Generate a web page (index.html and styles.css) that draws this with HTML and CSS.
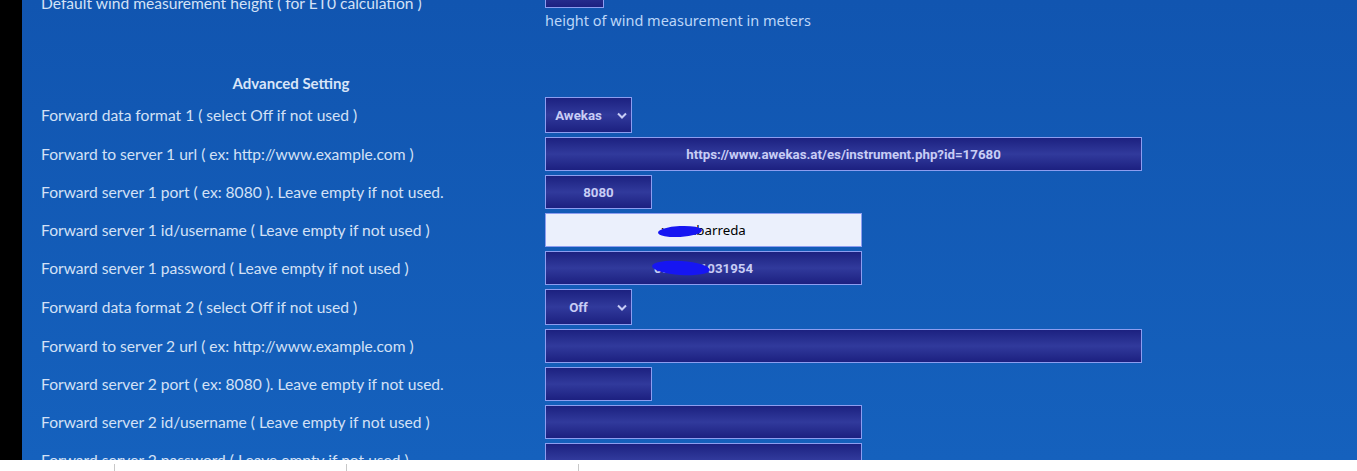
FILE: index.html
```html
<!DOCTYPE html>
<html>

<head>
    <meta charset="utf-8">
    <title>Weather station settings</title>
    <link rel="stylesheet" href="styles.css">
</head>

<body>
    <div class="screen">
        <div class="strip"></div>
        <main class="panel">
            <div class="form">
                <label class="name">Default wind measurement height ( for ET0 calculation )</label>
                <div class="field">
                    <input class="box tiny" type="text" value="">
                    <div class="hint">height of wind measurement in meters</div>
                </div>

                <div class="spacer"></div>

                <div class="section">Advanced Setting</div>

                <label class="name">Forward data format 1 ( select Off if not used )</label>
                <div class="field">
                    <span class="pick">
                        <select class="box">
                            <option>Off</option>
                            <option selected>Awekas</option>
                        </select>
                        <svg class="chev" width="10" height="7" viewBox="0 0 10 7"><path d="M1 1.5 L5 5.5 L9 1.5" fill="none" stroke="#c8cdf5" stroke-width="2"/></svg>
                    </span>
                </div>

                <label class="name">Forward to server 1 url ( ex: http://www.example.com )</label>
                <div class="field"><input class="box wide" type="text" value="https://www.awekas.at/es/instrument.php?id=17680"></div>

                <label class="name">Forward server 1 port ( ex: 8080 ). Leave empty if not used.</label>
                <div class="field"><input class="box short" type="text" value="8080"></div>

                <label class="name">Forward server 1 id/username ( Leave empty if not used )</label>
                <div class="field">
                    <span class="masked">
                        <input class="box mid light" type="text" value="xxxxxbarreda">
                        <span class="scribble user"></span>
                    </span>
                </div>

                <label class="name">Forward server 1 password ( Leave empty if not used )</label>
                <div class="field">
                    <span class="masked">
                        <input class="box mid" type="text" value="0000001031954">
                        <span class="scribble pass"></span>
                    </span>
                </div>

                <label class="name">Forward data format 2 ( select Off if not used )</label>
                <div class="field">
                    <span class="pick">
                        <select class="box">
                            <option selected>Off</option>
                            <option>Awekas</option>
                        </select>
                        <svg class="chev" width="10" height="7" viewBox="0 0 10 7"><path d="M1 1.5 L5 5.5 L9 1.5" fill="none" stroke="#c8cdf5" stroke-width="2"/></svg>
                    </span>
                </div>

                <label class="name">Forward to server 2 url ( ex: http://www.example.com )</label>
                <div class="field"><input class="box wide" type="text" value=""></div>

                <label class="name">Forward server 2 port ( ex: 8080 ). Leave empty if not used.</label>
                <div class="field"><input class="box short" type="text" value=""></div>

                <label class="name">Forward server 2 id/username ( Leave empty if not used )</label>
                <div class="field"><input class="box mid" type="text" value=""></div>

                <label class="name">Forward server 2 password ( Leave empty if not used )</label>
                <div class="field"><input class="box mid" type="password" value=""></div>
            </div>
        </main>
    </div>
    <footer class="tabs">
        <span></span>
        <span></span>
        <span></span>
        <span></span>
    </footer>
</body>

</html>
```

FILE: styles.css
```css
html,
body {
    margin: 0;
    padding: 0;
    width: 100%;
    height: 100%;
    overflow: hidden;
}

body {
    background-color: #fff;
    font-family: Lato, "Noto Sans", sans-serif;
}

.screen {
    display: flex;
    height: 460px;
    overflow: hidden;
}

.strip {
    width: 22px;
    flex: none;
    background-color: #000;
}

.panel {
    flex: 1;
    background: linear-gradient(#1155b0, #1561bd);
}

/* the page is scrolled a little, so the first row is cut at the top */
.form {
    display: grid;
    grid-template-columns: 504px auto;
    row-gap: 4px;
    margin-top: -26px;
    padding-left: 19px;
}

.name {
    display: flex;
    align-items: center;
    color: #d3e1f6;
    font-size: 15.6px;
}

.field {
    display: flex;
    flex-direction: column;
    align-items: flex-start;
}

.hint {
    height: 21px;
    padding-top: 2px;
    line-height: 20px;
    color: #bcd6f8;
    font-family: "Noto Sans", sans-serif;
    font-size: 14.5px;
}

.spacer {
    grid-column: 1 / 3;
    height: 35px;
}

.section {
    grid-column: 1 / 3;
    width: 500px;
    height: 19px;
    line-height: 19px;
    text-align: center;
    color: #d8e5f8;
    font-weight: bold;
    font-size: 15px;
}

.box {
    box-sizing: border-box;
    height: 34px;
    margin: 0;
    border: 1px solid #8d9df0;
    border-radius: 0;
    background: linear-gradient(#1c2180, #313a9c 50%, #1c2080);
    color: #c8cdf5;
    font-family: Roboto, sans-serif;
    font-weight: bold;
    font-size: 13.3px;
    text-align: center;
    outline: none;
}

.tiny {
    width: 59px;
}

.short {
    width: 107px;
}

.mid {
    width: 317px;
}

.wide {
    width: 597px;
}

.light {
    background: #ebf0fc;
    color: #000;
    font-weight: normal;
    font-family: "Noto Sans", sans-serif;
}

.pick {
    position: relative;
    display: inline-block;
}

.pick select {
    width: 87px;
    height: 36px;
    padding: 0 26px 0 6px;
    appearance: none;
    -webkit-appearance: none;
    text-align-last: center;
}

.chev {
    position: absolute;
    right: 5px;
    top: 15px;
    pointer-events: none;
}

.masked {
    position: relative;
    display: inline-block;
}

.scribble {
    position: absolute;
    background-color: #1616f2;
    border-radius: 50%;
}

.scribble.user {
    left: 113px;
    top: 13px;
    width: 44px;
    height: 11px;
    transform: rotate(-3deg);
}

.scribble.pass {
    left: 107px;
    top: 10px;
    width: 58px;
    height: 14px;
    transform: rotate(4deg);
}

.tabs {
    display: flex;
    height: 11px;
    background-color: #fff;
    padding-top: 4px;
    box-sizing: border-box;
}

.tabs span {
    width: 231px;
    border-left: 1px solid #c8c8c8;
}

.tabs span:first-child {
    width: 114px;
    border-left: none;
}
```
